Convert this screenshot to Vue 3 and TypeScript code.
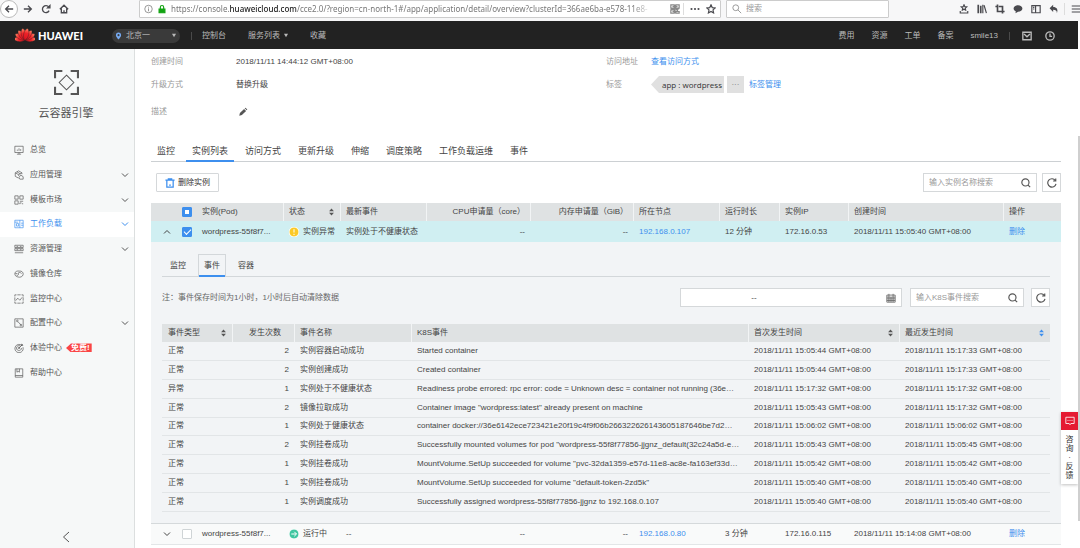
<script setup lang="ts">
import { ref } from 'vue'

interface NavItem { label: string; icon: string; expandable?: boolean; active?: boolean; badge?: string }
interface EventRow { type: string; count: number; name: string; message: string; first: string; last: string }

const navItems: NavItem[] = [
  { label: '总览', icon: 'M1 1.5H11V9H1ZM3.5 11H8.5M6 9V11M4 7V5.5M6 7V4M8 7V5' },
  { label: '应用管理', icon: 'M5.5 9.8L1.5 7.6V3.4L5.5 1L9.5 3.4V5M1.5 3.4L5.5 5.6L9.5 3.4M5.5 5.6V7M6 9L8 6L11 8V11H7ZM3.5 2.2L7.5 4.5', expandable: true },
  { label: '模板市场', icon: 'M1 1H5V5H1ZM7 1H11V5H7ZM1 7H5V11H1ZM7 7.5H11M7 11V9.5H9M11 10.5H9.5', expandable: true },
  { label: '工作负载', icon: 'M1 1.5H11V10.5H1ZM1 3.8H5M7 1.5V10.5M3 5.5H5.5V8.5H3ZM8.5 5H11M8.5 7.5H11', expandable: true, active: true },
  { label: '资源管理', icon: 'M1 1.5H11V4.2H1ZM1 5.5H11V8H1ZM1 10.5H11M3 2.9H5M7 2.9H9M3 6.8H5M7 6.8H9', expandable: true },
  { label: '镜像仓库', icon: 'M1 5.5C1 3 4 2 6.5 2.5C9 2 11.5 4 11 6.5C10.5 9.5 7 10.5 4.5 9.5C2 9 1 7.5 1 5.5ZM3 7.5C5 8.5 6 6 5 5C6 3.5 8 4 9 5.5M1.5 5.5H4' },
  { label: '监控中心', icon: 'M1 3V1H3M9 1H11V3M11 9V11H9M3 11H1V9M1 4V8M11 4V8M4 1H8M4 11H8M2 8L4.5 5L7 7.5L9.8 4' },
  { label: '配置中心', icon: 'M1 1H11V11H1ZM3 3.5A1 1 0 1 0 5 3.5A1 1 0 1 0 3 3.5M4.8 4.5L8 8M7.3 8.5A1 1 0 1 0 9.3 8.5A1 1 0 1 0 7.3 8.5', expandable: true },
  { label: '体验中心', icon: 'M9.5 3A5 5 0 1 0 10.8 5M8.3 4.2A3 3 0 1 0 9 6M5 6A1 1 0 1 0 7 6A1 1 0 1 0 5 6M6 6L10.8 1.2M9 1V3H11', badge: '免费!' },
  { label: '帮助中心', icon: 'M1.5 1H10.5V11H1.5ZM3.5 1V5L5 4L6.5 5V1M1.5 9H10.5' },
]

const tabs = ['监控', '实例列表', '访问方式', '更新升级', '伸缩', '调度策略', '工作负载运维', '事件']
const detailTabs = ['监控', '事件', '容器']
const activeTab = ref('实例列表')
const activeDetail = ref('事件')
const accountLinks = ['费用', '资源', '工单', '备案']

const day = (time: string): string => `2018/11/11 ${time} GMT+08:00`

const events: EventRow[] = [
  { type: '正常', count: 2, name: '实例容器启动成功', message: 'Started container', first: '15:05:44', last: '15:17:33' },
  { type: '正常', count: 2, name: '实例创建成功', message: 'Created container', first: '15:05:44', last: '15:17:33' },
  { type: '异常', count: 1, name: '实例处于不健康状态', message: 'Readiness probe errored: rpc error: code = Unknown desc = container not running (36e…', first: '15:17:32', last: '15:17:32' },
  { type: '正常', count: 2, name: '镜像拉取成功', message: 'Container image "wordpress:latest" already present on machine', first: '15:05:43', last: '15:17:32' },
  { type: '正常', count: 1, name: '实例处于健康状态', message: 'container docker://36e6142ece723421e20f19c4f9f06b266322626143605187646be7d2…', first: '15:06:02', last: '15:06:02' },
  { type: '正常', count: 2, name: '实例挂卷成功', message: 'Successfully mounted volumes for pod "wordpress-55f8f77856-jjgnz_default(32c24a5d-e…', first: '15:05:43', last: '15:05:45' },
  { type: '正常', count: 1, name: '实例挂卷成功', message: 'MountVolume.SetUp succeeded for volume "pvc-32da1359-e57d-11e8-ac8e-fa163ef33d…', first: '15:05:42', last: '15:05:42' },
  { type: '正常', count: 1, name: '实例挂卷成功', message: 'MountVolume.SetUp succeeded for volume "default-token-2zd5k"', first: '15:05:40', last: '15:05:40' },
  { type: '正常', count: 1, name: '实例调度成功', message: 'Successfully assigned wordpress-55f8f77856-jjgnz to 192.168.0.107', first: '15:05:40', last: '15:05:40' },
]

const petals = [-88, 88, -62, 62, -37, 37, -13, 13]
</script>

<template>
  <div class="page">
    <div class="browser">
      <div class="history">
        <button class="back" aria-label="后退"><svg viewBox="0 0 12 12"><path d="M11 6H2M6 2L2 6L6 10" /></svg></button>
        <button aria-label="前进"><svg viewBox="0 0 12 12"><path d="M1 6H10M6 2L10 6L6 10" /></svg></button>
        <button aria-label="刷新"><svg viewBox="0 0 12 12"><path d="M9.7 8A4.2 4.2 0 1 1 9.3 3.6" /><path class="solid" d="M8 4.7H10.7V2Z" /></svg></button>
        <button aria-label="主页"><svg viewBox="0 0 12 12"><path d="M1 6.2L6 1.5L11 6.2M2.8 5.5V10.5H9.2V5.5M6 10.5V7.5" /></svg></button>
      </div>
      <div class="address">
        <svg class="info-icon" viewBox="0 0 12 12"><circle cx="6" cy="6" r="5" /><path d="M6 5.2V9M6 3V4.2" /></svg>
        <svg class="lock" viewBox="0 0 12 12"><path class="solid" d="M2.5 6H9.5V10.5H2.5Z" /><path d="M4 6V3.8A2 2 0 0 1 8 3.8V6" /></svg>
        <div class="url">https://console.<b>huaweicloud.com</b>/cce2.0/?region=cn-north-1#/app/application/detail/overview?clusterId=366ae6ba-e578-11e8-</div>
        <svg class="qr" viewBox="0 0 12 12"><path d="M1 1H5V5H1ZM7 1H11V5H7ZM1 7H5V11H1ZM7 7H9V9H11V11H7V9M3 3H9M6 1V11M1 6H11M3 9H9" /></svg>
        <span class="rule"></span>
        <svg class="dots" viewBox="0 0 12 12"><circle cx="1.8" cy="6" r="1.3" /><circle cx="6" cy="6" r="1.3" /><circle cx="10.2" cy="6" r="1.3" /></svg>
        <svg viewBox="0 0 12 12"><path d="M6 1L7.5 4.3L11 4.7L8.4 7.1L9.1 10.7L6 8.9L2.9 10.7L3.6 7.1L1 4.7L4.5 4.3Z" /></svg>
      </div>
      <label class="web-search">
        <svg viewBox="0 0 12 12"><circle cx="4.5" cy="4.5" r="3.5" /><path d="M7 7L11 11" /></svg>
        <input type="text" placeholder="搜索" aria-label="搜索" />
      </label>
      <div class="tools">
        <svg viewBox="0 0 12 12"><path d="M6 1L7 3.2L9.3 3.5L7.6 5L8 7.3L6 6.2L4 7.3L4.4 5L2.7 3.5L5 3.2ZM1.5 8.5V10.8H10.5V8.5" /></svg>
        <svg viewBox="0 0 12 12"><path class="heavy" d="M1.5 1V11M4.5 2V11" /><path d="M7 1V11M8.5 1.5L11.3 11" /></svg>
        <svg viewBox="0 0 12 12"><path class="heavy" d="M3 0.5V9H8M0.5 3H2M4.5 3H9V11.5M10 9H11.5" /></svg>
        <svg viewBox="0 0 12 12"><path class="blob" d="M6 1.5C9 1.5 11.3 3 11.3 5.5C11.3 8 9 9.3 6 9.3L3 11L3.3 8.8C1.5 8 .7 7 .7 5.5C.7 3 3 1.5 6 1.5Z" /></svg>
        <svg viewBox="0 0 12 12"><path d="M1 2H11V10.5H1ZM5.5 2V10.5M2.5 4H4M2.5 6H4" /></svg>
        <svg viewBox="0 0 12 12"><path class="blob" d="M5 1V3.5C9 3.5 11.3 6 9.5 11C9.5 8 8 7 5 7V9.5L.7 5.2Z" /></svg>
        <span class="rule"></span>
        <svg class="burger" viewBox="0 0 12 12"><path d="M1 2H12M1 6H12M1 10H12" /></svg>
      </div>
    </div>

    <header class="topbar">
      <a class="brand" href="#">
        <svg viewBox="0 0 36 28">
          <defs><linearGradient id="petal" x1="0" y1="0" x2="0" y2="1"><stop offset="0" stop-color="#ff8a66" /><stop offset="0.4" stop-color="#ee2229" /><stop offset="1" stop-color="#d8121e" /></linearGradient></defs>
          <path v-for="angle in petals" :key="angle" d="M18 22C11.500 16 12.500 3 18 0C23.500 3 24.500 16 18 22Z" :transform="`rotate(${angle} 18 20)`" />
        </svg>
        <span>HUAWEI</span>
      </a>
      <div class="region">
        <svg class="pin" viewBox="0 0 12 14"><path d="M6 1A4.5 4.5 0 0 0 1.5 5.5C1.5 8.5 6 13 6 13S10.5 8.5 10.5 5.5A4.5 4.5 0 0 0 6 1ZM6 3.7A1.8 1.8 0 1 1 6 7.3A1.8 1.8 0 1 1 6 3.7Z" fill-rule="evenodd" /></svg>
        <select aria-label="区域"><option>北京一</option></select>
        <svg class="caret" viewBox="0 0 6 6"><path d="M0 .5H6L3 5.5Z" /></svg>
      </div>
      <span class="split"></span>
      <nav class="menu">
        <a href="#">控制台</a>
        <a href="#">服务列表<svg class="caret" viewBox="0 0 6 6"><path d="M0 .5H6L3 5.5Z" /></svg></a>
        <a href="#">收藏</a>
      </nav>
      <nav class="account">
        <a v-for="item in accountLinks" :key="item" href="#">{{ item }}</a>
        <a href="#">smile13</a>
      </nav>
      <span class="split"></span>
      <button aria-label="消息"><svg viewBox="0 0 12 12"><path d="M1 1.5H11V10.5H1ZM2.5 3.5L6 7L9.5 3.5" /></svg></button>
      <button aria-label="历史"><svg viewBox="0 0 12 12"><circle cx="6" cy="6" r="5" /><path d="M6 3V6.5H8.5" /></svg></button>
    </header>

    <div class="body">
      <aside class="sidebar">
        <div class="service">
          <svg viewBox="0 0 24 24"><path class="frame" d="M1 8V1H8M16 1H23V8M23 16V23H16M8 23H1V16" /><path d="M12 5L19 12L12 19L5 12Z" /></svg>
          <h1>云容器引擎</h1>
        </div>
        <ul class="nav">
          <li v-for="item in navItems" :key="item.label" :class="{ active: item.active }">
            <a href="#">
              <svg class="nav-icon" viewBox="0 0 12 12"><path :d="item.icon" /></svg>
              <span>{{ item.label }}</span>
              <em v-if="item.badge">{{ item.badge }}</em>
              <svg v-if="item.expandable" class="chevron" viewBox="0 0 8 8"><path d="M1 2.5L4 5.5L7 2.5" /></svg>
            </a>
          </li>
        </ul>
        <button class="collapse" aria-label="收起"><svg viewBox="0 0 8 12"><path d="M7 1L1.5 6L7 11" /></svg></button>
      </aside>

      <main class="main">
        <div class="summary">
          <dl>
            <div><dt>创建时间</dt><dd>{{ day('14:44:12') }}</dd></div>
            <div><dt>升级方式</dt><dd>替换升级</dd></div>
            <div class="tall"><dt>描述</dt><dd><button class="edit" aria-label="编辑描述"><svg viewBox="0 0 12 12"><path d="M1.5 10.5L2.3 7.3L7.3 2.3L9.7 4.7L4.7 9.7ZM8 1.6L9 .8L11.2 3L10.4 4Z" /></svg></button></dd></div>
          </dl>
          <dl class="short">
            <div><dt>访问地址</dt><dd><a href="#">查看访问方式</a></dd></div>
            <div><dt>标签</dt><dd class="tags"><span class="tag">app : wordpress</span><button class="more">···</button><a href="#">标签管理</a></dd></div>
          </dl>
        </div>

        <div class="tabs" role="tablist">
          <button v-for="tab in tabs" :key="tab" role="tab" :aria-selected="tab === activeTab" :class="{ on: tab === activeTab }" @click="activeTab = tab">{{ tab }}</button>
        </div>

        <div class="toolbar">
          <button class="delete"><svg viewBox="0 0 12 12"><path d="M.5 2.5H11.5M2.2 2.5V11H9.8V2.5M4 2.5V1H8V2.5M5 8.5H7" /></svg>删除实例</button>
          <label class="search"><input type="text" placeholder="输入实例名称搜索" aria-label="输入实例名称搜索" /><svg viewBox="0 0 12 12"><circle cx="5.3" cy="5.3" r="4.3" /><path d="M8.5 8.5L11 11" /></svg></label>
          <button class="refresh" aria-label="刷新列表"><svg viewBox="0 0 12 12"><path d="M10.8 7A5 5 0 1 1 10 3M10.5 .5V3.6H7.3" /></svg></button>
        </div>

        <table class="pods">
          <colgroup><col class="c-exp" /><col class="c-check" /><col class="c-pod" /><col class="c-state" /><col class="c-event" /><col class="c-cpu" /><col class="c-mem" /><col class="c-node" /><col class="c-age" /><col class="c-ip" /><col /><col class="c-op" /></colgroup>
          <thead>
            <tr>
              <th></th>
              <th class="box"><input type="checkbox" class="partial" :indeterminate="true" aria-label="全选" /></th>
              <th>实例(Pod)</th>
              <th class="cut"><div class="sortable">状态<svg class="sort" viewBox="0 0 6 10"><path d="M0 4L3 .5L6 4Z" /><path d="M0 6L3 9.5L6 6Z" /></svg></div></th>
              <th class="cut">最新事件</th>
              <th class="cut num">CPU申请量（core）</th>
              <th class="cut num">内存申请量（GiB）</th>
              <th class="cut">所在节点</th>
              <th class="cut">运行时长</th>
              <th class="cut">实例IP</th>
              <th class="cut">创建时间</th>
              <th class="cut">操作</th>
            </tr>
          </thead>
          <tbody>
            <tr class="chosen">
              <td class="box"><button class="expand" aria-label="收起详情"><svg viewBox="0 0 8 8"><path d="M1 5.5L4 2.5L7 5.5" /></svg></button></td>
              <td class="box"><input type="checkbox" checked aria-label="选择实例" /></td>
              <td>wordpress-55f8f7...</td>
              <td><div class="state"><svg viewBox="0 0 10 10"><circle cx="5" cy="5" r="5" fill="#fbc926" /><path d="M5 2.2V5.5M5 6.8V8" /></svg>实例异常</div></td>
              <td>实例处于不健康状态</td>
              <td class="num">--</td>
              <td class="num">--</td>
              <td><a href="#">192.168.0.107</a></td>
              <td>12 分钟</td>
              <td>172.16.0.53</td>
              <td>{{ day('15:05:40') }}</td>
              <td><a href="#">删除</a></td>
            </tr>
            <tr class="detail">
              <td colspan="12">
                <div class="subtabs" role="tablist">
                  <button v-for="tab in detailTabs" :key="tab" role="tab" :aria-selected="tab === activeDetail" :class="{ on: tab === activeDetail }" @click="activeDetail = tab">{{ tab }}</button>
                </div>
                <div class="filters">
                  <p>注：事件保存时间为1小时，1小时后自动清除数据</p>
                  <label class="range"><input type="text" value="--" aria-label="时间范围" /><svg viewBox="0 0 12 12"><path d="M1 2.5H11V11H1ZM1 5H11M1 7H11M1 9H11M3.5 1V11M6 5V11M8.5 1V11" /></svg></label>
                  <label class="search"><input type="text" placeholder="输入K8S事件搜索" aria-label="输入K8S事件搜索" /><svg viewBox="0 0 12 12"><circle cx="5.3" cy="5.3" r="4.3" /><path d="M8.5 8.5L11 11" /></svg></label>
                  <button class="refresh" aria-label="刷新事件"><svg viewBox="0 0 12 12"><path d="M10.8 7A5 5 0 1 1 10 3M10.5 .5V3.6H7.3" /></svg></button>
                </div>
                <table class="events">
                  <colgroup><col class="e-type" /><col class="e-count" /><col class="e-name" /><col /><col class="e-time" /><col class="e-time" /></colgroup>
                  <thead>
                    <tr>
                      <th><div class="sortable">事件类型<svg class="sort" viewBox="0 0 6 10"><path d="M0 4L3 .5L6 4Z" /><path d="M0 6L3 9.5L6 6Z" /></svg></div></th>
                      <th class="cut count">发生次数</th>
                      <th class="cut">事件名称</th>
                      <th class="cut">K8S事件</th>
                      <th class="cut"><div class="sortable">首次发生时间<svg class="sort" viewBox="0 0 6 10"><path d="M0 4L3 .5L6 4Z" /><path d="M0 6L3 9.5L6 6Z" /></svg></div></th>
                      <th class="cut"><div class="sortable">最近发生时间<svg class="sort desc" viewBox="0 0 6 10"><path d="M0 4L3 .5L6 4Z" /><path d="M0 6L3 9.5L6 6Z" /></svg></div></th>
                    </tr>
                  </thead>
                  <tbody>
                    <tr v-for="(row, i) in events" :key="i">
                      <td>{{ row.type }}</td>
                      <td class="num">{{ row.count }}</td>
                      <td>{{ row.name }}</td>
                      <td class="message">{{ row.message }}</td>
                      <td>{{ day(row.first) }}</td>
                      <td>{{ day(row.last) }}</td>
                    </tr>
                  </tbody>
                </table>
              </td>
            </tr>
            <tr class="plain">
              <td class="box"><button class="expand" aria-label="展开详情"><svg viewBox="0 0 8 8"><path d="M1 2.5L4 5.5L7 2.5" /></svg></button></td>
              <td class="box"><input type="checkbox" aria-label="选择实例" /></td>
              <td>wordpress-55f8f7...</td>
              <td><div class="state"><svg viewBox="0 0 10 10"><circle cx="5" cy="5" r="5" fill="#3fc6a0" /><path d="M2.3 5H7.5M5.3 2.8L7.5 5L5.3 7.2" /></svg>运行中</div></td>
              <td>--</td>
              <td class="num">--</td>
              <td class="num">--</td>
              <td><a href="#">192.168.0.80</a></td>
              <td>3 分钟</td>
              <td>172.16.0.115</td>
              <td>{{ day('15:14:08') }}</td>
              <td><a href="#">删除</a></td>
            </tr>
          </tbody>
        </table>
      </main>
    </div>

    <button class="feedback">
      <span class="bubble"><svg viewBox="0 0 12 12"><path d="M1 1.5H11V9H7L6 10.5L5 9H1ZM3 5.3H4.2M5.4 5.3H6.6M7.8 5.3H9" /></svg></span>
      <span class="words">咨询·反馈</span>
    </button>
    <div class="thumb"></div>
  </div>
</template>

<style>
html,
body {
  background: #fff;
}
</style>

<style scoped>
* {
  box-sizing: border-box;
}

.page {
  position: relative;
  display: flex;
  flex-direction: column;
  min-height: 100vh;
  overflow: hidden;
  color: #444;
  font: 8px/12px "Liberation Sans", "Noto Sans CJK SC", sans-serif;
}

button,
input,
select {
  margin: 0;
  padding: 0;
  border: 0;
  background: none;
  color: inherit;
  font: inherit;
  outline: 0;
}

button {
  display: flex;
  align-items: center;
  justify-content: center;
}

a {
  color: #3d8fee;
  text-decoration: none;
}

svg {
  flex: none;
  width: 10px;
  height: 10px;
  fill: none;
  stroke: currentColor;
}

.browser {
  display: flex;
  height: 21px;
  padding-bottom: 3px;
  background: #f7f7f8;
  color: #4a4a4f;
}

.history {
  display: flex;
  width: 139px;
}

.history button {
  width: 18px;
  height: 18px;
}

.history svg {
  stroke-width: 1.6;
}

.history .back {
  border: 1px solid #bbb;
  border-radius: 9px;
  background: #fff;
}

.history .back + button {
  margin-left: 1px;
}

.solid {
  fill: currentColor;
}

.blob {
  fill: currentColor;
  stroke: none;
}

.address,
.web-search {
  display: flex;
  align-items: center;
  border: 1px solid #ccc;
  border-radius: 1px;
  background: #fff;
}

.address {
  flex: 1;
  min-width: 0;
  padding: 0 4px;
}

.address svg {
  stroke-width: 1.4;
}

.address .info-icon {
  width: 9px;
  color: #777;
  stroke-width: 1;
}

.address .lock {
  margin: 0 4px;
  color: #12a312;
}

.url {
  flex: 1;
  margin-right: 18px;
  color: #777;
  font: 8px/14px "Noto Sans", sans-serif;
  white-space: nowrap;
  mask-image: linear-gradient(to left, transparent, #000 20px);
}

.url b {
  color: #222;
  font-weight: 500;
}

.address .qr {
  color: #888;
}

.rule {
  width: 1px;
  height: 12px;
  margin: 0 6px 0 3px;
  background: #ddd;
}

.address .dots {
  margin-right: 6px;
  fill: currentColor;
  stroke: none;
}

.web-search {
  width: 163px;
  margin-left: 5px;
  padding-left: 5px;
  gap: 4px;
  color: #888;
}

.web-search input {
  min-width: 0;
}

.tools {
  display: flex;
  align-items: center;
  margin-left: 70px;
  gap: 8px;
}

.tools svg {
  stroke-width: 1.4;
}

.tools .heavy {
  stroke-width: 2;
}

.tools .rule {
  margin: 0 -2px 0 -3px;
}

.tools .burger {
  width: 9px;
}

.topbar {
  display: flex;
  align-items: center;
  height: 28px;
  margin-right: 2px;
  padding: 1px 23px 0 15px;
  background: #222;
  color: #bbb;
}

.topbar a {
  color: inherit;
}

.brand {
  display: flex;
  align-items: center;
  gap: 3px;
}

.brand svg {
  width: 20px;
  height: 16px;
  fill: url(#petal);
  stroke: #222;
  stroke-width: 0.6;
}

.topbar .brand span {
  width: 74px;
  color: #fff;
  font: 900 11px/14px Lato, sans-serif;
}

.region {
  display: flex;
  align-items: center;
  width: 68px;
  height: 14px;
  padding: 0 4px 0 3px;
  border-radius: 7px;
  background: #3a3a3a;
}

.region .pin {
  width: 7px;
  height: 8px;
  fill: #76aaf2;
  stroke: none;
}

.region select {
  flex: 1;
  min-width: 0;
  height: 14px;
  padding-left: 4px;
  appearance: none;
}

.caret {
  width: 4px;
  height: 5px;
  fill: currentColor;
  stroke: none;
}

.split {
  width: 1px;
  height: 8px;
  margin: 0 10px 0 11px;
  background: #4a4a4a;
}

.menu {
  display: flex;
  gap: 22px;
}

.menu .caret {
  margin-left: 4px;
}

.account {
  display: flex;
  margin-left: auto;
  gap: 17px;
}

.topbar button {
  margin-left: 2px;
}

.topbar button + button {
  margin-left: 13px;
}

.topbar button svg {
  stroke-width: 1.6;
}

.body {
  display: flex;
  flex: 1;
}

.sidebar {
  display: flex;
  flex: none;
  flex-direction: column;
  width: 135px;
  padding-bottom: 5px;
  border-right: 1px solid #dcdfdf;
  background: #f6f8f8;
  color: #555;
}

.service {
  display: flex;
  flex-direction: column;
  align-items: center;
  height: 89px;
  padding: 21px 2px 0 0;
}

.service svg {
  width: 25px;
  height: 25px;
}

.service .frame {
  stroke-width: 2;
}

.service h1 {
  margin: 9px 0 0;
  font: 11px/18px "Liberation Sans", "Noto Sans CJK SC", sans-serif;
}

.nav {
  display: grid;
  grid-auto-rows: 1fr;
  height: 247px;
  margin: 0;
  padding: 0;
  list-style: none;
}

.nav a {
  display: flex;
  align-items: center;
  height: 100%;
  padding: 0 5px 0 14px;
  color: inherit;
}

.nav .active {
  background: #fff;
  color: #3d8fee;
}

.nav-icon {
  margin-right: 6px;
  stroke-width: 0.8;
}

.nav .chevron {
  width: 8px;
  height: 8px;
  margin-left: auto;
}

.nav em {
  margin-left: 4px;
  padding: 0 2px 0 5px;
  clip-path: polygon(0 50%, 5px 0, 100% 0, 100% 100%, 5px 100%);
  background: #fa4545;
  color: #fff;
  font-style: normal;
  font-weight: 700;
  line-height: 9px;
}

.collapse {
  align-self: center;
  margin: auto 2px 0 0;
}

.collapse svg {
  width: 8px;
  height: 12px;
}

.main {
  flex: 1;
  min-width: 0;
  padding: 1px 19px 0 16px;
}

.summary {
  display: grid;
  grid-template-columns: 1fr 1fr;
}

dl,
dd {
  margin: 0;
}

dl > div {
  display: flex;
  align-items: center;
  height: 23px;
}

dl > .tall {
  height: 32px;
}

dt {
  width: 85px;
  color: #999;
}

.short dt {
  width: 45px;
}

.edit svg {
  margin-left: 2px;
  fill: #555;
  stroke: none;
}

.tags {
  display: flex;
  align-items: center;
}

.tag {
  padding: 0 2px 0 11px;
  clip-path: polygon(0 50%, 8px 0, 100% 0, 100% 100%, 8px 100%);
  background: #e0e0e0;
  color: #333;
  font: 8px/17px "Open Sans", sans-serif;
}

.more {
  width: 17px;
  height: 17px;
  margin: 0 5px 0 3px;
  background: #e0e0e0;
  color: #777;
}

.tabs {
  display: flex;
  gap: 5px;
  margin-top: 12px;
  border-bottom: 1px solid #ccd0d3;
  font-size: 9px;
}

.tabs button {
  height: 21px;
  padding: 0 6px;
}

.tabs .on,
.subtabs .on {
  position: relative;
}

.tabs .on::after,
.subtabs .on::after {
  position: absolute;
  right: 0;
  bottom: -1px;
  left: 0;
  height: 2px;
  background: #3d8fee;
  content: "";
}

.toolbar {
  display: flex;
  align-items: center;
  padding: 11px 0 11px 5px;
}

.delete {
  gap: 3px;
  width: 63px;
  height: 19px;
  margin-right: auto;
  border: 1px solid #d5d8da;
  border-radius: 1px;
  color: #333;
}

.delete svg {
  color: #3d8fee;
  stroke-width: 1.5;
}

.search,
.range {
  display: flex;
  align-items: center;
  width: 114px;
  height: 19px;
  padding: 0 5px;
  border: 1px solid #d5d8da;
  background: #fff;
}

.search input,
.range input {
  flex: 1;
  min-width: 0;
}

.search svg,
.refresh svg {
  color: #555;
  stroke-width: 1.4;
}

::placeholder {
  color: #999;
  opacity: 1;
}

.refresh {
  width: 19px;
  height: 19px;
  margin-left: 5px;
  border: 1px solid #d5d8da;
  background: #fff;
}

table {
  width: 100%;
  border-spacing: 0;
  table-layout: fixed;
}

th,
td {
  padding: 0 6px;
  font-weight: 400;
  text-align: left;
  white-space: nowrap;
}

th {
  height: 18px;
  background: #dfe2e3;
}

.cut {
  border-left: 1px solid #f2f4f5;
  padding-left: 5px;
}

th.num,
td.num {
  padding-right: 5px;
  text-align: right;
}

.box {
  padding: 0;
}

.c-exp { width: 31px; }
.c-check { width: 14px; }
.c-pod { width: 87px; }
.c-state { width: 57px; }
.c-event { width: 86px; }
.c-cpu { width: 104px; }
.c-mem { width: 103px; }
.c-node { width: 86px; }
.c-age { width: 60px; }
.c-ip { width: 69px; }
.c-op { width: 58px; }

.sortable {
  display: flex;
  align-items: center;
  justify-content: space-between;
}

.sort {
  width: 5px;
  height: 8px;
  fill: #555;
  stroke: none;
}

.sort.desc {
  fill: #3d8fee;
}

input[type="checkbox"] {
  display: block;
  position: relative;
  width: 10px;
  height: 10px;
  border: 1px solid #cfd4d6;
  border-radius: 1px;
  appearance: none;
  background: #fff;
}

input[type="checkbox"]:checked,
input[type="checkbox"].partial {
  border-color: #3d8fee;
  background: #3d8fee;
}

input[type="checkbox"]:checked::after {
  position: absolute;
  top: 1px;
  left: 1px;
  width: 6px;
  height: 3px;
  border: solid #fff;
  border-width: 0 0 1px 1px;
  content: "";
  transform: rotate(-45deg);
}

input[type="checkbox"].partial::after {
  position: absolute;
  top: 2px;
  left: 2px;
  width: 4px;
  height: 4px;
  background: #fff;
  content: "";
}

.expand {
  margin-left: 12px;
}

.expand svg {
  width: 8px;
  height: 8px;
}

.chosen td {
  height: 21px;
  background: #d0eff2;
}

.state {
  display: flex;
  align-items: center;
  gap: 4px;
}

.state svg {
  stroke: #fff;
}

.plain td {
  height: 22px;
  border-top: 1px solid #d5d9db;
  border-bottom: 1px solid #e3e6e7;
  background: #f9fafa;
}

.detail > td {
  padding: 12px 11px 11px;
  background: #f2f4f6;
}

.subtabs {
  display: flex;
  gap: 6px;
  padding-left: 2px;
  border-bottom: 1px solid #d3d7da;
}

.subtabs button {
  width: 28px;
  height: 22px;
  border: 1px solid transparent;
  border-bottom: 0;
}

.subtabs .on {
  border-color: #d3d7da;
}

.filters {
  display: flex;
  align-items: center;
  margin: 11px 0 17px;
}

.filters p {
  margin: 0 auto 0 0;
  color: #666;
}

.filters .refresh {
  margin-left: 7px;
}

.filters .range {
  width: 222px;
  margin-right: 8px;
}

.range input {
  padding-right: 64px;
  text-align: center;
}

.range svg {
  color: #666;
}

.events {
  height: 188px;
}

.events td {
  height: 18px;
  border-bottom: 1px solid #e2e5e7;
}

.e-type { width: 70px; }
.e-count { width: 62px; }
.e-name { width: 117px; }
.e-time { width: 151px; }

.events .count {
  padding-right: 13px;
  text-align: right;
}

.events .message {
  overflow: hidden;
  padding-right: 0;
  text-overflow: ellipsis;
}

.feedback {
  position: absolute;
  top: 412px;
  right: 2px;
  flex-direction: column;
  width: 17px;
  background: #fff;
  box-shadow: 0 1px 3px rgb(0 0 0 / 25%);
  color: #333;
}

.bubble {
  display: flex;
  align-items: center;
  justify-content: center;
  width: 100%;
  height: 18px;
  background: #e51a32;
  color: #fff;
}

.words {
  width: 8px;
  padding: 5px 0 4px;
  line-height: 9px;
  word-break: break-all;
}

.thumb {
  position: absolute;
  top: 136px;
  right: 0;
  width: 2px;
  height: 385px;
  background: #cfcfcf;
}
</style>
